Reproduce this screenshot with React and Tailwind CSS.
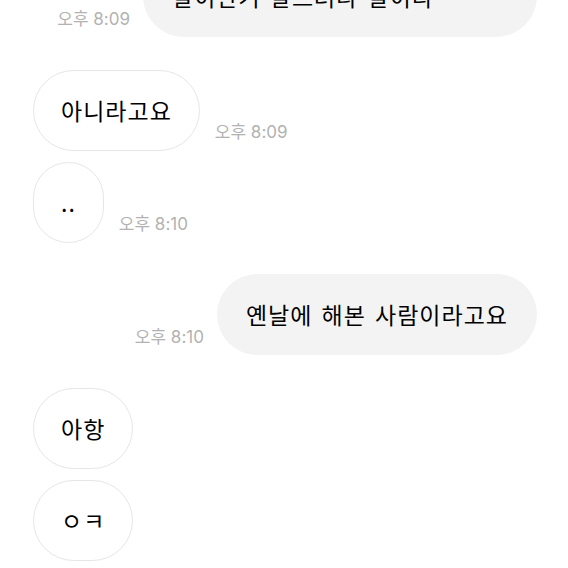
import React from 'react';

const messages = [
  { id: 1, mine: true, lines: ['그러니까 제 말은 경험 있는 사람', '말이란거 알으려나 말이라'], time: '오후 8:09', gap: 'mt-[-77px]', wide: true },
  { id: 2, mine: false, lines: ['아니라고요'], time: '오후 8:09', gap: 'mt-[33px]', tsGap: 'mb-[9px]' },
  { id: 3, mine: false, lines: ['..'], time: '오후 8:10', gap: 'mt-[11px]', tsGap: 'mb-[9px]' },
  { id: 4, mine: true, lines: ['옌날에 해본 사람이라고요'], time: '오후 8:10', gap: 'mt-[31px]' },
  { id: 5, mine: false, lines: ['아항'], gap: 'mt-[33px]' },
  { id: 6, mine: false, lines: ['ㅇㅋ'], gap: 'mt-[11px]' },
];

const stampFont = { fontFamily: 'Inter, "Noto Sans CJK KR", sans-serif' };

const Bubble = ({ msg }) => {
  const text = msg.lines.map((line, i) => (
    <React.Fragment key={i}>
      {i > 0 && <br />}
      {line}
    </React.Fragment>
  ));

  if (msg.mine) {
    return (
      <div className={`flex items-end justify-end ${msg.gap}`}>
        {msg.time && (
          <span
            className="mr-[13px] mb-[8px] text-[17px] leading-[20px] text-[#b2b2b2] whitespace-nowrap"
            style={stampFont}
          >
            {msg.time}
          </span>
        )}
        <div
          className={`bg-[#f3f3f3] rounded-[41px] px-[29px] py-[24px] text-[23px] leading-[33px] tracking-[1px] text-black [word-spacing:3px] ${msg.wide ? 'w-[394px]' : ''}`}
        >
          {text}
        </div>
      </div>
    );
  }

  return (
    <div className={`flex items-end ${msg.gap}`}>
      <div className="bg-white border border-[#e6e6e6] rounded-[41px] px-[27px] py-[23px] text-[23px] leading-[33px] tracking-[1px] text-black whitespace-nowrap">
        {text}
      </div>
      {msg.time && (
        <span
          className={`ml-[15px] ${msg.tsGap} text-[17px] leading-[20px] text-[#b2b2b2] whitespace-nowrap`}
          style={stampFont}
        >
          {msg.time}
        </span>
      )}
    </div>
  );
};

export default function App() {
  return (
    <div
      className="w-[568px] h-[568px] overflow-hidden bg-white"
      style={{ fontFamily: '"Noto Sans CJK KR", "Noto Sans", sans-serif' }}
    >
      <div className="flex flex-col pl-[33px] pr-[31px]">
        {messages.map((msg) => (
          <Bubble key={msg.id} msg={msg} />
        ))}
      </div>
    </div>
  );
}
